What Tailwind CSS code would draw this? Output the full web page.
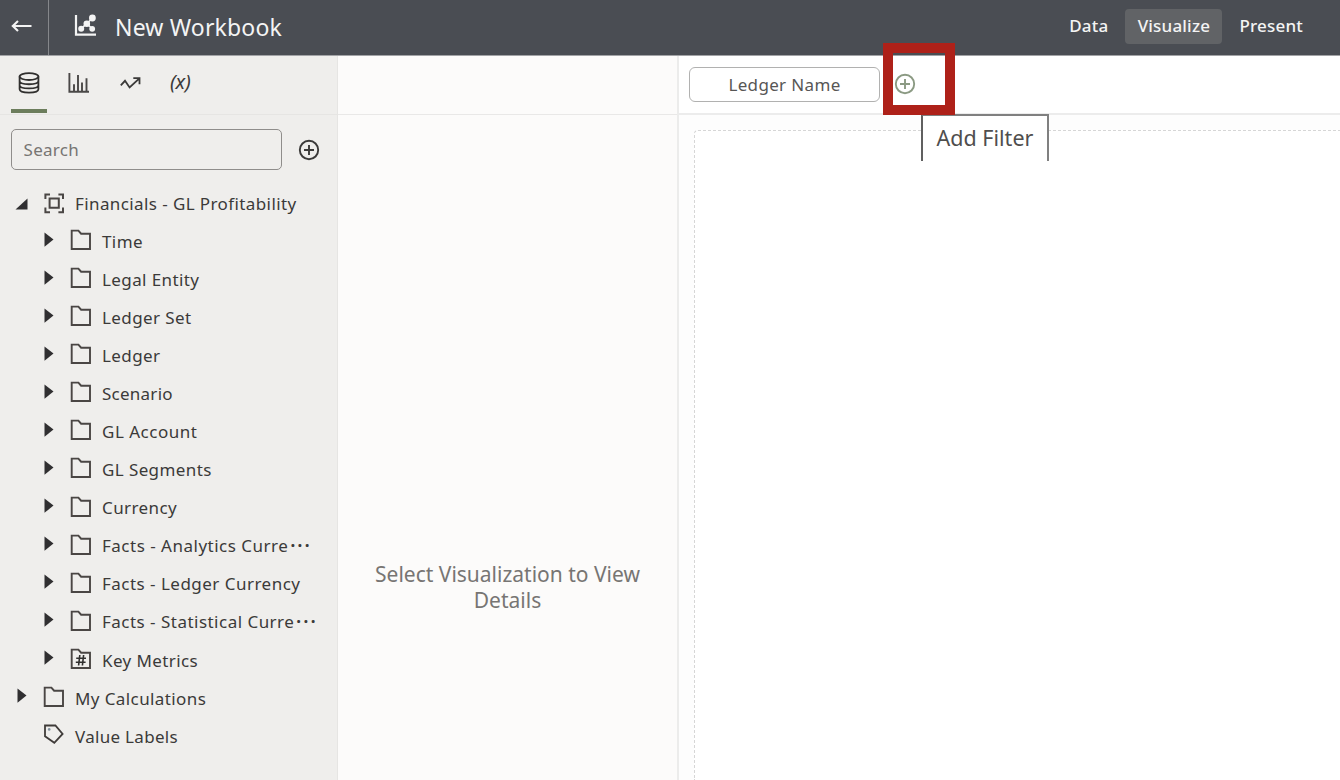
<!DOCTYPE html>
<html lang="en">
<head>
<meta charset="utf-8">
<title>New Workbook</title>
<script src="https://cdn.jsdelivr.net/npm/@tailwindcss/browser@4"></script>
</head>
<body class="w-[1340px] h-[780px] overflow-hidden bg-white font-['Noto_Sans','Open_Sans',sans-serif] text-[#3b3a39]">
<svg class="hidden">
  <symbol id="folder" viewBox="0 0 22 22"><path d="M1.7 1.6H8.4L11.1 4.7H20V20H1.7Z" fill="none" stroke="#4a4644" stroke-width="1.9"/></symbol>
  <symbol id="arrow" viewBox="0 0 10 16"><path d="M0.5 0.4L9.5 7.6L0.5 14.8Z" fill="#302f31"/></symbol>
  <symbol id="plus" viewBox="0 0 22 22"><g fill="none" stroke="currentColor" stroke-width="1.9"><circle cx="11" cy="11" r="9.2"/><path d="M11 6V16M6 11H16"/></g></symbol>
</svg>
<div class="flex h-full flex-col">
  <header class="flex h-14 shrink-0 items-center border-b border-[#a2a3a6] bg-[#4a4d53] text-[#f4f4f4]">
    <div class="flex h-full w-[49px] items-center border-r border-[#85878b] pl-[11px] pb-1">
      <svg class="h-4 w-[22px]" viewBox="0 0 22 16" fill="none" stroke="currentColor" stroke-width="2.1"><path d="M20.5 8H2M7 3L1.8 8L7 13"/></svg>
    </div>
    <svg class="ml-[25px] mb-1 size-[23px]" viewBox="0 0 23 23" fill="none" stroke="currentColor"><path d="M2 1V20.6H22" stroke-width="2.2"/><path d="M7.3 14.7L12.7 9.7L18.5 4M12.7 9.7L18 14.5" stroke-width="1.6"/><g fill="currentColor" stroke="none"><circle cx="7.2" cy="14.8" r="3"/><circle cx="12.8" cy="9.8" r="3.3"/><circle cx="18.4" cy="4" r="3.4"/><circle cx="18.2" cy="14.8" r="2.9"/></g></svg>
    <h1 class="ml-[18px] pb-px text-[23px] leading-8 tracking-[0.17px]">New Workbook</h1>
    <nav class="ml-auto mr-[25px] flex items-center pb-[3px] text-[17px] font-medium tracking-[0.2px]">
      <span class="mr-[17px]">Data</span>
      <span class="flex h-[35px] w-[97px] items-center justify-center rounded bg-[#616366]">Visualize</span>
      <span class="ml-[17px] mr-3">Present</span>
    </nav>
  </header>
  <main class="flex min-h-0 flex-1">
    <aside class="w-[338px] shrink-0 border-r border-[#e6e5e3] bg-[#efeeec]">
      <div class="flex h-[59px] border-b border-[#e6e5e3] pl-[11px]">
        <div class="flex h-[57px] w-9 justify-center border-b-4 border-[#6c7d5c] pt-4">
          <svg class="size-[22px]" viewBox="0 0 22 22" fill="none" stroke="#302f2e" stroke-width="1.8"><ellipse cx="11" cy="4.6" rx="9.4" ry="3.4"/><path d="M1.6 4.6V17.2C1.6 21.7 20.4 21.7 20.4 17.2V4.6M1.6 9C1.6 13.3 20.4 13.3 20.4 9M1.6 13.2C1.6 17.5 20.4 17.5 20.4 13.2"/></svg>
        </div>
        <svg class="ml-[20px] mt-4 h-[22px] w-[23px]" viewBox="0 0 23 22" fill="none" stroke="#4a4847" stroke-width="1.9"><path d="M2.4 1V19.7H22"/><path d="M7 19V12.3M11 19V3M15 19V10.5M19.5 19V6.2"/></svg>
        <svg class="ml-[30px] mt-[21px] h-3 w-[21px]" viewBox="0 0 21 12" fill="none" stroke="#3b3a39" stroke-width="1.8"><path d="M0.8 8.3L5 3.8L9.6 10.4L19.4 1.3M13.3 1.2H19.5V7.3"/></svg>
        <span class="ml-[29px] mt-[12px] text-[20px] italic leading-7 tracking-[-0.2px]">(x)</span>
      </div>
      <div class="flex items-center pl-[10.5px] pt-[14px]">
        <input class="h-[41px] w-[271px] rounded-[5px] border-[1.5px] border-[#8f8d8b] px-3 text-[17px] tracking-[0.3px] placeholder:text-[#777573]" placeholder="Search">
        <svg class="ml-[16.5px] size-[22px] text-[#3b3a39]"><use href="#plus"/></svg>
      </div>
      <ul class="mt-[14.5px] text-[17px] tracking-[0.4px] *:flex *:h-[38.07px] *:items-center *:whitespace-nowrap">
        <li class="pl-[15px]"><svg class="h-3 w-[13px]" viewBox="0 0 13 12"><path d="M12.5 0.5V11.5H0.5Z" fill="#302f31"/></svg><svg class="ml-4 mr-[10px] size-[21px]" viewBox="0 0 21 21" fill="none" stroke="#4a4644" stroke-width="2"><path d="M5.6 5.6H14.8V14.8H5.6ZM1.4 6V1.4H6M14.4 1.4H19V6M19 14.6V19.2H14.4M6 19.2H1.4V14.6"/></svg>Financials - GL Profitability</li>
        <li class="pl-[44px]"><svg class="mb-1 mr-4 h-4 w-[10px]"><use href="#arrow"/></svg><svg class="mb-[3px] mr-[10px] size-[22px]"><use href="#folder"/></svg>Time</li>
        <li class="pl-[44px]"><svg class="mb-1 mr-4 h-4 w-[10px]"><use href="#arrow"/></svg><svg class="mb-[3px] mr-[10px] size-[22px]"><use href="#folder"/></svg>Legal Entity</li>
        <li class="pl-[44px]"><svg class="mb-1 mr-4 h-4 w-[10px]"><use href="#arrow"/></svg><svg class="mb-[3px] mr-[10px] size-[22px]"><use href="#folder"/></svg>Ledger Set</li>
        <li class="pl-[44px]"><svg class="mb-1 mr-4 h-4 w-[10px]"><use href="#arrow"/></svg><svg class="mb-[3px] mr-[10px] size-[22px]"><use href="#folder"/></svg>Ledger</li>
        <li class="pl-[44px] tracking-[0.25px]"><svg class="mb-1 mr-4 h-4 w-[10px]"><use href="#arrow"/></svg><svg class="mb-[3px] mr-[10px] size-[22px]"><use href="#folder"/></svg>Scenario</li>
        <li class="pl-[44px] tracking-[0.5px]"><svg class="mb-1 mr-4 h-4 w-[10px]"><use href="#arrow"/></svg><svg class="mb-[3px] mr-[10px] size-[22px]"><use href="#folder"/></svg>GL Account</li>
        <li class="pl-[44px]"><svg class="mb-1 mr-4 h-4 w-[10px]"><use href="#arrow"/></svg><svg class="mb-[3px] mr-[10px] size-[22px]"><use href="#folder"/></svg>GL Segments</li>
        <li class="pl-[44px]"><svg class="mb-1 mr-4 h-4 w-[10px]"><use href="#arrow"/></svg><svg class="mb-[3px] mr-[10px] size-[22px]"><use href="#folder"/></svg>Currency</li>
        <li class="pl-[44px] tracking-[0.5px]"><svg class="mb-1 mr-4 h-4 w-[10px]"><use href="#arrow"/></svg><svg class="mb-[3px] mr-[10px] size-[22px]"><use href="#folder"/></svg>Facts - Analytics Curre<span class="pl-0.5 font-bold tracking-[2.4px]">···</span></li>
        <li class="pl-[44px] tracking-[0.48px]"><svg class="mb-1 mr-4 h-4 w-[10px]"><use href="#arrow"/></svg><svg class="mb-[3px] mr-[10px] size-[22px]"><use href="#folder"/></svg>Facts - Ledger Currency</li>
        <li class="pl-[44px] tracking-[0.48px]"><svg class="mb-1 mr-4 h-4 w-[10px]"><use href="#arrow"/></svg><svg class="mb-[3px] mr-[10px] size-[22px]"><use href="#folder"/></svg>Facts - Statistical Curre<span class="pl-0.5 font-bold tracking-[2.4px]">···</span></li>
        <li class="pl-[44px]"><svg class="mb-1 mr-4 h-4 w-[10px]"><use href="#arrow"/></svg><svg class="mb-[3px] mr-[10px] size-[22px]" viewBox="0 0 22 22"><use href="#folder" width="22" height="22"/><path d="M9.8 7L8.6 17.5M13.6 7L12.4 17.5M6.2 10.3H16M5.8 14.3H15.6" stroke="#302f2e" stroke-width="1.6"/></svg>Key Metrics</li>
        <li class="pl-[17px]"><svg class="mb-1 mr-4 h-4 w-[10px]"><use href="#arrow"/></svg><svg class="mb-[3px] mr-[10px] size-[22px]"><use href="#folder"/></svg>My Calculations</li>
        <li class="pl-[43px] tracking-[0.3px]"><svg class="mb-1 mr-[10px] size-[22px]" viewBox="0 0 22 22"><path d="M2 2.5H12.4L19.6 10.9L11.3 19.8L2 13.3Z" fill="none" stroke="#3f3b39" stroke-width="1.8"/><circle cx="6.2" cy="6.4" r="1.3" fill="#8292a0"/></svg>Value Labels</li>
      </ul>
    </aside>
    <section class="flex w-[341px] shrink-0 flex-col border-r-2 border-[#ececeb] bg-[#fcfbfa]">
      <div class="h-[59px] shrink-0 border-b border-[#e9e8e7]"></div>
      <p class="mt-[446px] text-center text-[21px] leading-[26px] text-[#777573]">Select Visualization to View<br>Details</p>
    </section>
    <section class="flex min-w-0 flex-1 flex-col">
      <div class="relative z-10 flex h-[59px] shrink-0 items-center border-b-2 border-[#ececec] pl-[10px]">
        <div class="flex h-[35px] w-[191px] items-center justify-center rounded-md border-[1.5px] border-[#b1b1b0] text-[17px] tracking-[0.35px] text-[#575655]">Ledger Name</div>
        <svg class="mb-0.5 ml-[14px] size-[22px] text-[#8b9a83]"><use href="#plus"/></svg>
        <div class="absolute left-[204px] top-[-13px] z-20 h-[72px] w-[72px] border-[10px] border-[#ae2119]"></div>
        <div class="absolute left-[242px] top-[58px] flex h-[47px] w-[128px] items-center justify-center border-x-2 border-t-2 border-[#808080] border-l-[#606060] bg-white text-[21.5px] text-[#4f4e4d]">Add Filter</div>
      </div>
      <div class="flex-1 bg-[#fdfdfd] pl-[15px] pt-[15px]">
        <div class="h-full rounded-tl border-l border-t border-dashed border-[#d6d6d6] bg-white"></div>
      </div>
    </section>
  </main>
</div>
</body>
</html>
